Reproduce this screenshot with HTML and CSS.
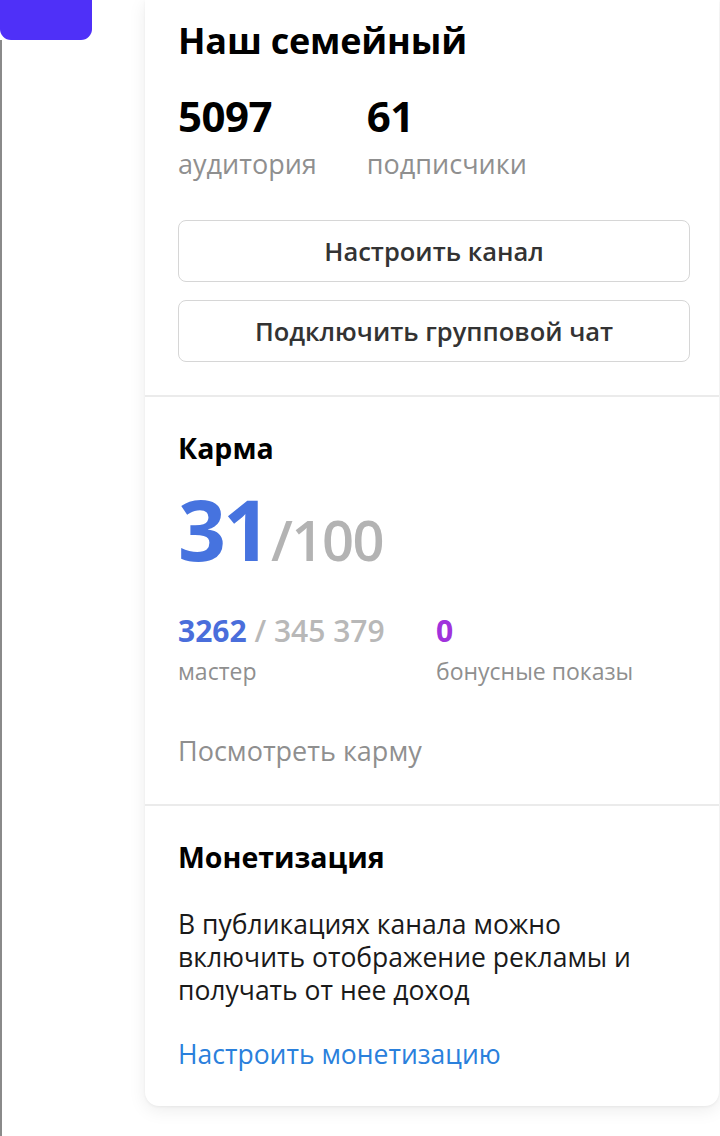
FILE: index.html
```html
<!DOCTYPE html>
<html lang="ru">
<head>
<meta charset="utf-8">
<title>Наш семейный</title>
<link rel="stylesheet" href="styles.css">
</head>
<body>
<div class="page">
  <aside class="side">
    <div class="side-btn"></div>
    <div class="side-rail"></div>
  </aside>
  <main class="card">
    <section class="sec sec-channel">
      <h1 class="title">Наш семейный</h1>
      <div class="stats">
        <div class="stat">
          <div class="stat-num">5097</div>
          <div class="stat-label">аудитория</div>
        </div>
        <div class="stat">
          <div class="stat-num">61</div>
          <div class="stat-label">подписчики</div>
        </div>
      </div>
      <div class="buttons">
        <button class="btn">Настроить канал</button>
        <button class="btn">Подключить групповой чат</button>
      </div>
    </section>
    <section class="sec sec-karma">
      <h2 class="h2">Карма</h2>
      <div class="karma"><span class="karma-val">31</span><span class="karma-max">/100</span></div>
      <div class="kstats">
        <div class="kstat kstat-a">
          <div class="kstat-num"><span class="blue">3262</span><span class="grey"> / 345 379</span></div>
          <div class="kstat-label">мастер</div>
        </div>
        <div class="kstat">
          <div class="kstat-num"><span class="purple">0</span></div>
          <div class="kstat-label">бонусные показы</div>
        </div>
      </div>
      <div class="see">Посмотреть карму</div>
    </section>
    <section class="sec sec-money">
      <h2 class="h2">Монетизация</h2>
      <p class="text">В публикациях канала можно<br>включить отображение рекламы и<br>получать от нее доход</p>
      <a class="link" href="#">Настроить монетизацию</a>
    </section>
  </main>
</div>
</body>
</html>
```
FILE: styles.css
```css
* { box-sizing: border-box; }
html, body { margin: 0; padding: 0; }
body {
  width: 720px;
  height: 1136px;
  overflow: hidden;
  background: #ffffff;
  font-family: "Open Sans", "Noto Sans", sans-serif;
  color: #000;
}
.page {
  display: flex;
  align-items: flex-start;
  height: 1136px;
}
.side {
  width: 145px;
  flex: none;
  display: flex;
  flex-direction: column;
  height: 1136px;
}
.side-btn {
  width: 92px;
  height: 40px;
  background: #4f30f8;
  border-radius: 0 0 11px 11px;
  flex: none;
}
.side-rail {
  flex: 1;
  width: 2px;
  background: #8a8a8a;
}
.card {
  width: 574px;
  flex: none;
  background: #fff;
  border-radius: 0 0 14px 14px;
  box-shadow: 0 4px 18px rgba(0,0,0,0.08), 0 1px 3px rgba(0,0,0,0.05);
}
.sec {
  padding: 0 30px 0 33px;
}
.sec + .sec {
  border-top: 2px solid #ebebeb;
}
.sec-channel { padding-top: 18px; padding-bottom: 33px; }
.title {
  margin: 0;
  font-size: 36px;
  font-weight: 700;
  line-height: 46px;
  letter-spacing: -0.2px;
}
.stats {
  display: flex;
  gap: 50px;
  margin-top: 28px;
}
.stat-num {
  font-size: 42px;
  font-weight: 700;
  line-height: 48px;
  letter-spacing: -0.5px;
}
.stat-label {
  margin-top: 6px;
  font-size: 27px;
  line-height: 36px;
  color: #8f8f8f;
}
.buttons {
  display: flex;
  flex-direction: column;
  gap: 18px;
  margin-top: 38px;
}
.btn {
  height: 62px;
  width: 512px;
  background: #fff;
  border: 1.5px solid #d6d6d6;
  border-radius: 8px;
  font-family: inherit;
  font-size: 25.5px;
  font-weight: 600;
  color: #333;
}
.sec-karma { padding-top: 34px; padding-bottom: 35px; }
.h2 {
  margin: 0;
  font-size: 28.5px;
  font-weight: 700;
  line-height: 34px;
}
.karma {
  margin-top: 19px;
  line-height: 90px;
  height: 90px;
}
.karma-val {
  font-size: 84px;
  font-weight: 700;
  color: #4673df;
  letter-spacing: -3px;
}
.karma-max {
  font-size: 56px;
  font-weight: 600;
  color: #b3b3b3;
  letter-spacing: -1.5px;
  margin-left: 3px;
}
.kstats {
  display: flex;
  margin-top: 37px;
}
.kstat-a { width: 258px; }
.kstat-num {
  font-size: 30px;
  font-weight: 700;
  line-height: 40px;
}
.blue { color: #4a6edb; }
.grey { color: #b8b8b8; font-weight: 600; }
.purple { color: #a032dc; }
.kstat-label {
  margin-top: 3px;
  font-size: 23px;
  line-height: 34px;
  color: #8f8f8f;
}
.see {
  margin-top: 45px;
  font-size: 27px;
  line-height: 36px;
  color: #8f8f8f;
}
.sec-money { padding-top: 34px; padding-bottom: 35px; }
.text {
  margin: 34px 0 0;
  font-size: 26.5px;
  line-height: 33px;
  color: #1a1a1a;
}
.link {
  display: block;
  margin-top: 30px;
  font-size: 26.5px;
  line-height: 34px;
  color: #2a80dc;
  text-decoration: none;
}
```
